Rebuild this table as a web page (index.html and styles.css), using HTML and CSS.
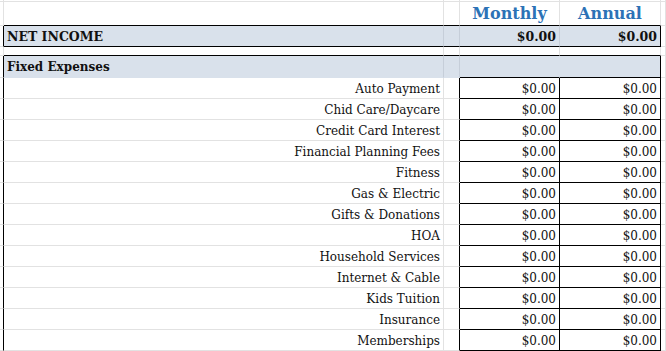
FILE: index.html
```html
<!DOCTYPE html>
<html>
<head>
<meta charset="utf-8">
<link rel="stylesheet" href="styles.css">
</head>
<body>
<div class="sheet">
  <div class="row top"><div class="cell c0"></div><div class="cell c1"></div><div class="cell c2"></div><div class="cell c3"></div><div class="cell c4"></div><div class="cell c5"></div></div>
  <div class="row head"><div class="cell c0"></div><div class="cell c1"></div><div class="cell c2"></div><div class="cell c3">Monthly</div><div class="cell c4">Annual</div><div class="cell c5"></div></div>
  <div class="row net"><div class="cell c0"></div><div class="cell c1">NET INCOME</div><div class="cell c2"></div><div class="cell c3">$0.00</div><div class="cell c4">$0.00</div><div class="cell c5"></div></div>
  <div class="row gap"><div class="cell c0"></div><div class="cell c1"></div><div class="cell c2"></div><div class="cell c3"></div><div class="cell c4"></div><div class="cell c5"></div></div>
  <div class="row section"><div class="cell c0"></div><div class="cell c1">Fixed Expenses</div><div class="cell c2"></div><div class="cell c3"></div><div class="cell c4"></div><div class="cell c5"></div></div>
  <div class="row item"><div class="cell c0"></div><div class="cell c1">Auto Payment</div><div class="cell c2"></div><div class="cell c3">$0.00</div><div class="cell c4">$0.00</div><div class="cell c5"></div></div>
  <div class="row item"><div class="cell c0"></div><div class="cell c1">Chid Care/Daycare</div><div class="cell c2"></div><div class="cell c3">$0.00</div><div class="cell c4">$0.00</div><div class="cell c5"></div></div>
  <div class="row item"><div class="cell c0"></div><div class="cell c1">Credit Card Interest</div><div class="cell c2"></div><div class="cell c3">$0.00</div><div class="cell c4">$0.00</div><div class="cell c5"></div></div>
  <div class="row item"><div class="cell c0"></div><div class="cell c1">Financial Planning Fees</div><div class="cell c2"></div><div class="cell c3">$0.00</div><div class="cell c4">$0.00</div><div class="cell c5"></div></div>
  <div class="row item"><div class="cell c0"></div><div class="cell c1">Fitness</div><div class="cell c2"></div><div class="cell c3">$0.00</div><div class="cell c4">$0.00</div><div class="cell c5"></div></div>
  <div class="row item"><div class="cell c0"></div><div class="cell c1">Gas &amp; Electric</div><div class="cell c2"></div><div class="cell c3">$0.00</div><div class="cell c4">$0.00</div><div class="cell c5"></div></div>
  <div class="row item"><div class="cell c0"></div><div class="cell c1">Gifts &amp; Donations</div><div class="cell c2"></div><div class="cell c3">$0.00</div><div class="cell c4">$0.00</div><div class="cell c5"></div></div>
  <div class="row item"><div class="cell c0"></div><div class="cell c1">HOA</div><div class="cell c2"></div><div class="cell c3">$0.00</div><div class="cell c4">$0.00</div><div class="cell c5"></div></div>
  <div class="row item"><div class="cell c0"></div><div class="cell c1">Household Services</div><div class="cell c2"></div><div class="cell c3">$0.00</div><div class="cell c4">$0.00</div><div class="cell c5"></div></div>
  <div class="row item"><div class="cell c0"></div><div class="cell c1">Internet &amp; Cable</div><div class="cell c2"></div><div class="cell c3">$0.00</div><div class="cell c4">$0.00</div><div class="cell c5"></div></div>
  <div class="row item"><div class="cell c0"></div><div class="cell c1">Kids Tuition</div><div class="cell c2"></div><div class="cell c3">$0.00</div><div class="cell c4">$0.00</div><div class="cell c5"></div></div>
  <div class="row item"><div class="cell c0"></div><div class="cell c1">Insurance</div><div class="cell c2"></div><div class="cell c3">$0.00</div><div class="cell c4">$0.00</div><div class="cell c5"></div></div>
  <div class="row item"><div class="cell c0"></div><div class="cell c1">Memberships</div><div class="cell c2"></div><div class="cell c3">$0.00</div><div class="cell c4">$0.00</div><div class="cell c5"></div></div>
</div>
</body>
</html>
```
FILE: styles.css
```css
html, body {
  margin: 0;
  padding: 0;
  background: #ffffff;
}
body {
  font-family: "DejaVu Serif", "Liberation Serif", serif;
  color: #111111;
  overflow: hidden;
}
.sheet {
  display: grid;
  grid-template-columns: 4px 440px 16px 100px 101px 1fr;
  grid-template-rows: 2px 24px 21px 9px 22px repeat(13, 21px);
}
.row {
  display: contents;
}
.cell {
  box-sizing: border-box;
  border-right: 1px solid #e2e2e2;
  border-bottom: 1px solid #e2e2e2;
  display: flex;
  align-items: center;
  white-space: nowrap;
  overflow: hidden;
  font-size: 12px;
}

/* header */
.head .c1, .head .c2, .head .c3, .head .c4 {
  border-bottom-color: #000000;
}
.head .c3, .head .c4 {
  justify-content: center;
  align-items: flex-end;
  padding-bottom: 2px;
  font-weight: bold;
  font-size: 16px;
  color: #2c72b6;
}

/* net income */
.net .c0 { border-right-color: #000000; }
.net .c1, .net .c2, .net .c3, .net .c4 {
  background: #d9e1eb;
  border-bottom-color: #000000;
  border-right-color: #c6ced9;
  font-weight: bold;
  font-size: 12.5px;
  padding-top: 1px;
}
.net .c4 { border-right-color: #000000; }
.net .c1 { padding-left: 3px; }
.net .c3, .net .c4 {
  justify-content: flex-end;
  padding-right: 3px;
}

/* spacer */
.gap .c1, .gap .c2, .gap .c3, .gap .c4 {
  border-bottom-color: #000000;
}

/* section band */
.section .c0 { border-right-color: #000000; }
.section .c1, .section .c2, .section .c3, .section .c4 {
  background: #d9e1eb;
  border-right-color: #c6ced9;
  border-bottom-color: #d9e1eb;
}
.section .c3 { border-right-color: #d9e1eb; }
.section .c3, .section .c4 { border-bottom-color: #000000; }
.section .c4 { border-right-color: #000000; }
.section .c1 {
  padding-left: 3px;
  padding-top: 1px;
  font-weight: bold;
  font-size: 12px;
}

/* items */
.item .c0 { border-right-color: #000000; }
.item .c1 {
  justify-content: flex-end;
  padding-right: 3px;
  padding-top: 1px;
}
.item .c2 { border-right-color: #000000; }
.item .c3, .item .c4 {
  border-right-color: #000000;
  border-bottom-color: #000000;
  justify-content: flex-end;
  padding-right: 3px;
  padding-top: 1px;
}
```
